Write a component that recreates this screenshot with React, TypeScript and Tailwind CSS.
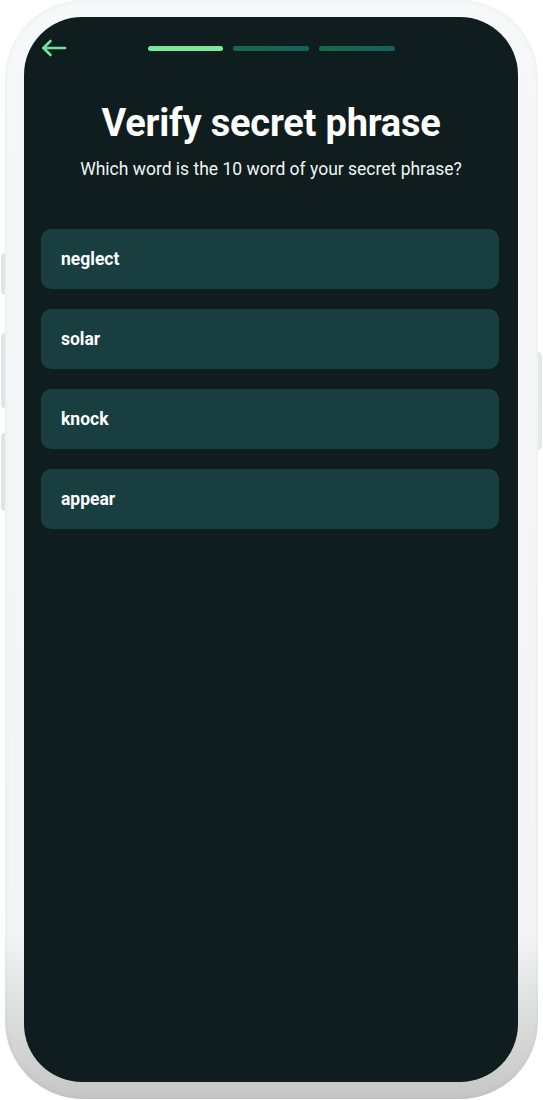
import React from 'react';

const words = ['neglect', 'solar', 'knock', 'appear'];

const BackArrow: React.FC = () => (
	<svg width="26" height="18" viewBox="0 0 26 18" fill="none" stroke="#6fe39a" strokeWidth="2.6" strokeLinecap="round" strokeLinejoin="round">
		<path d="M24 9H2.5" />
		<path d="M9.5 2L2.5 9l7 7" />
	</svg>
);

const App: React.FC = () => {
	return (
		<div className="w-[543px] h-[1100px] bg-white relative overflow-hidden" style={{ fontFamily: 'Roboto, "Liberation Sans", sans-serif' }}>
			{/* hardware buttons */}
			<div className="absolute left-[1px] top-[253px] w-[4px] h-[42px] rounded-l-sm bg-[#e2e3e4]" />
			<div className="absolute left-[1px] top-[333px] w-[4px] h-[75px] rounded-l-sm bg-[#e2e3e4]" />
			<div className="absolute left-[1px] top-[433px] w-[4px] h-[78px] rounded-l-sm bg-[#e2e3e4]" />
			<div className="absolute right-[1px] top-[352px] w-[4px] h-[98px] rounded-r-sm bg-[#e6e7e8]" />

			{/* phone frame */}
			<div className="ml-[5px] w-[533px] h-[1099px] rounded-[78px] bg-gradient-to-b from-[#f7f8f9] via-[#f3f4f5] via-85% to-[#c6c6c6] pt-[17px] pb-[17px] pl-[19px] pr-[20px] shadow-[inset_0_0_6px_rgba(0,0,0,0.05)]">
				<div className="h-full rounded-[58px] bg-[#0f1d1e] overflow-hidden flex flex-col">
					{/* top bar */}
					<div className="relative h-[62px] flex items-center justify-center pt-[4px]">
						<div className="absolute left-[17px] top-[22px]">
							<BackArrow />
						</div>
						<div className="flex gap-[10px] -mt-[4px]">
							<div className="w-[75px] h-[5px] rounded-full bg-[#7ee89a]" />
							<div className="w-[76px] h-[5px] rounded-full bg-gradient-to-r from-[#176b45] to-[#146060]" />
							<div className="w-[76px] h-[5px] rounded-full bg-gradient-to-r from-[#176b45] to-[#146060]" />
						</div>
					</div>

					<h1 className="mt-[22px] text-center text-white font-bold text-[38px] leading-[44px] tracking-[-0.2px]">Verify secret phrase</h1>
					<p className="mt-[13px] text-center text-[#f2f4f4] text-[17.5px] leading-[22px]">Which word is the 10 word of your secret phrase?</p>

					<div className="mt-[49px] ml-[17px] mr-[19px] flex flex-col gap-[20px]">
						{words.map((w) => (
							<div key={w} className="h-[60px] rounded-[10px] bg-[#183e3f] flex items-center px-[20px]">
								<span className="text-white font-bold text-[17.5px]">{w}</span>
							</div>
						))}
					</div>
				</div>
			</div>
		</div>
	);
};

export default App;
